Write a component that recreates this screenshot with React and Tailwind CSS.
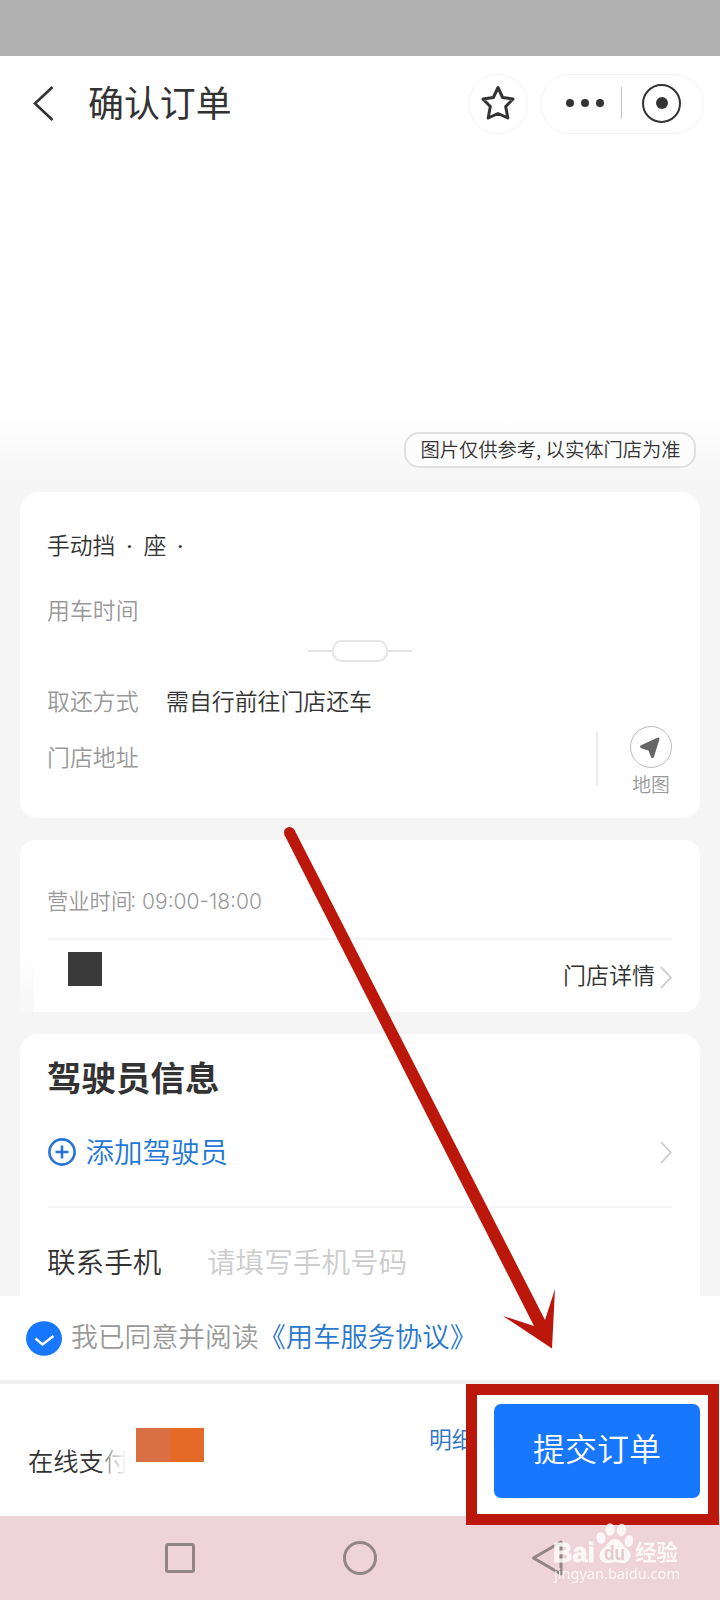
import React from "react";

function StatusBar() {
  return <div className="h-14 shrink-0 bg-[#b0b0b0]" />;
}

function Header() {
  return (
    <header className="flex h-[94px] shrink-0 items-center bg-white pt-px pr-4 pl-8">
      <svg width="24" height="36" viewBox="0 0 24 36" fill="none" stroke="#333" strokeWidth="2.6">
        <path d="M20.500 1 3 17.500 20.500 34" />
      </svg>
      <h1 className="mb-1 ml-8 text-[35.9px] leading-none font-normal text-[#333]">确认订单</h1>
      <div className="ml-auto flex items-center gap-3">
        <div className="flex size-[60px] items-center justify-center rounded-full border border-[#f3f3f3]">
          <svg className="mb-0.5" width="34" height="36" viewBox="0 0 34 36" fill="none" stroke="#333" strokeWidth="3" strokeLinejoin="round">
            <path d="M17 2.500 21.600 12.500 32 14 24.700 21.500 26.800 33 17 28.500 7.200 33 9.300 21.500 2 14 12.400 12.500Z" />
          </svg>
        </div>
        <div className="flex h-[60px] w-[164px] items-center rounded-full border border-[#f3f3f3] pb-px pl-[25px]">
          <div className="flex gap-[7px]">
            <i className="size-2 rounded-full bg-[#333]" />
            <i className="size-2 rounded-full bg-[#333]" />
            <i className="size-2 rounded-full bg-[#333]" />
          </div>
          <div className="ml-[17px] h-8 w-px bg-[#c4c4c4]" />
          <div className="ml-5 flex size-[39px] items-center justify-center rounded-full border-[2.5px] border-[#333]">
            <i className="size-3 rounded-full bg-[#333]" />
          </div>
        </div>
      </div>
    </header>
  );
}

function Hero() {
  return (
    <section className="flex h-[342px] shrink-0 items-end justify-end bg-linear-to-b from-white from-77% to-[#f5f5f5] to-98% pr-6 pb-6">
      <div className="flex h-9 w-[292px] items-center justify-center rounded-[15px] border-2 border-[#e0e0e0] bg-[#fcfcfc] text-[19.3px] leading-none whitespace-pre text-[#333]">
        <span className="ml-px">图片仅供参考, 以实体门店为准</span>
      </div>
    </section>
  );
}

function Chevron() {
  return (
    <svg width="13" height="24" viewBox="0 0 13 24" fill="none" stroke="#cacaca" strokeWidth="1.8">
      <path d="M2 2 11.800 12.500 2 23" />
    </svg>
  );
}

function Dot() {
  return (
    <span className="inline-block w-[28px] text-center font-medium" style={{ fontFamily: "Roboto, sans-serif" }}>·</span>
  );
}

function TripCard() {
  return (
    <section className="flex h-[326px] shrink-0 flex-col rounded-[18px] bg-white pr-7 pl-[27px] text-[22.9px] leading-8 text-[#999]">
      <div className="mt-[37px] h-8 text-[22.8px] whitespace-pre text-[#333]">
        手动挡<Dot />座<Dot />
      </div>
      <div className="mt-8 h-8">用车时间</div>
      <div className="mt-[15px] ml-px flex h-[22px] items-center justify-center">
        <i className="h-0.5 w-6 bg-[#e4e4e4]" />
        <i className="h-[22px] w-14 rounded-[10px] border-2 border-[#e4e4e4]" />
        <i className="h-0.5 w-6 bg-[#e4e4e4]" />
      </div>
      <div className="mt-[22px] flex h-8">
        <span className="w-[119px]">取还方式</span>
        <span className="text-[#333]">需自行前往门店还车</span>
      </div>
      <div className="mt-[10px] flex h-[78px]">
        <span className="pt-[14px]">门店地址</span>
        <i className="mt-[6px] ml-auto h-[54px] w-0.5 bg-[#ececec]" />
        <div className="ml-[32px] flex w-[42px] flex-col items-center text-[18.8px] leading-5">
          <div className="flex size-[42px] shrink-0 items-center justify-center rounded-full border border-[#bdbdbd]">
            <svg width="22" height="24" viewBox="0 0 22 24" className="-ml-0.5" fill="#666" stroke="#666" strokeWidth="3" strokeLinejoin="round">
              <path d="M19 4 2.600 11.700 10.500 14.200 13.400 21.500Z" />
            </svg>
          </div>
          <span className="mt-[6px]">地图</span>
        </div>
      </div>
    </section>
  );
}

function StoreCard() {
  return (
    <section className="mt-[22px] flex h-[172px] shrink-0 overflow-hidden rounded-[16px] rounded-bl-none bg-white">
      <div className="mt-[110px] h-[62px] w-3.5 bg-linear-to-b from-white to-[#f7f7f7]" />
      <div className="flex flex-1 flex-col pr-7 pl-3.5">
        <div className="mt-[44px] -ml-px h-8 text-[21.3px] leading-8 whitespace-nowrap text-[#999]">
          营业时间<span className="-ml-0.5 text-[21px]" style={{ fontFamily: 'Inter, "Noto Sans CJK SC", sans-serif' }}>: 09:00-18:00</span>
        </div>
        <div className="mt-[22px] h-0.5 bg-[#f5f5f5]" />
        <div className="flex h-[72px]">
          <i className="mt-[12px] ml-5 size-[34px] bg-[#3a3a3a]" />
          <div className="ml-auto flex h-[72px] items-center text-[23px] leading-none text-[#333]">
            <span className="mb-[3px]">门店详情</span>
            <span className="mt-px ml-[4px]"><Chevron /></span>
          </div>
        </div>
      </div>
    </section>
  );
}

function DriverCard() {
  return (
    <section className="mt-[22px] flex h-[262px] shrink-0 flex-col rounded-t-[18px] bg-white px-7">
      <h2 className="mt-[18px] -ml-px h-12 text-[34.5px] leading-12 font-bold text-[#333]">驾驶员信息</h2>
      <div className="mt-[28px] flex h-12 items-center text-[28.5px] leading-none text-[#1f77d6]">
        <svg width="28" height="28" viewBox="0 0 28 28" fill="none" stroke="#2673d9" strokeWidth="2.600">
          <circle cx="14" cy="14" r="12.600" />
          <path d="M14 7.500v13M7.500 14h13" />
        </svg>
        <span className="mb-px ml-[9.5px]">添加驾驶员</span>
        <span className="ml-auto"><Chevron /></span>
      </div>
      <div className="mt-[30px] h-0.5 bg-[#f5f5f5]" />
      <div className="mt-[29px] -ml-px flex h-12 text-[28.600px] leading-12">
        <span className="w-[160px] text-[#333]">联系手机</span>
        <span className="text-[#ccc]">请填写手机号码</span>
      </div>
    </section>
  );
}

function Agreement() {
  return (
    <section className="flex h-[84px] shrink-0 items-center bg-white pl-[26px] text-[26.8px] leading-none">
      <svg className="mt-0.5" width="36" height="36" viewBox="0 0 36 36">
        <ellipse cx="18" cy="17.500" rx="18" ry="17.200" fill="#1877ff" />
        <path d="m9.500 17.500 7 6 11-8.500" fill="none" stroke="#fff" strokeWidth="2.400" />
      </svg>
      <span className="mb-[5px] ml-[9px] whitespace-nowrap text-[#999]">
        我已同意并阅读<span className="text-[27.3px] text-[#2a78cc]">《用车服务协议》</span>
      </span>
    </section>
  );
}

function PayBar() {
  return (
    <section className="flex h-[136px] shrink-0 border-t-4 border-[#efefef] bg-white">
      <div className="mt-[60px] ml-[28px] h-8 w-[100px] text-[25.3px] leading-8 whitespace-nowrap text-[#333]">
        在线支<span className="bg-linear-to-r from-[#888] to-white to-90% bg-clip-text text-transparent">付</span>
      </div>
      <div className="mt-11 ml-2 flex h-[34px]">
        <i className="w-[34px] bg-[#d87044]" />
        <i className="w-[34px] bg-[#e56a28]" />
      </div>
      <div className="mt-[39px] ml-[225px] h-8 w-[37px] overflow-hidden text-[22.800px] leading-8 whitespace-nowrap text-[#2a74c4]">明细</div>
      <div className="relative z-10 h-[141px] w-[253px] shrink-0 border-[11px] border-[#bb180b] bg-white pt-[9px] pl-[17px]">
        <button className="h-[94px] w-[206px] rounded-[7px] bg-[#1877ff] pb-[9px] text-[32px] leading-none text-white">提交订单</button>
      </div>
    </section>
  );
}

function Watermark() {
  return (
    <div className="absolute top-[1521px] left-[552px] z-20 h-[64px] w-[130px] opacity-80">
      <svg width="130" height="64" viewBox="0 0 130 64" fill="#fff">
        <ellipse cx="49" cy="17" rx="4.500" ry="6" transform="rotate(-12 49 17)" />
        <ellipse cx="58" cy="8.500" rx="4.600" ry="6.300" />
        <ellipse cx="69.500" cy="9" rx="4.600" ry="6.300" transform="rotate(8 69.500 9)" />
        <ellipse cx="77" cy="20" rx="4.300" ry="5.800" transform="rotate(12 77 20)" />
        <path d="M63 18c-5 0-6 4-10 8-4 3-6 5.500-5.500 10 1 5 5.500 6.500 9.500 6 4-1 8-1 12 0 5 .5 8.500-2 9.500-6 .5-5-1.500-7-5.500-10-4-4-5-8-10-8Z" />
        <g stroke="#fff" strokeWidth=".8">
          <text x="1" y="40.500" fontSize="28" fontWeight="700" textLength="42" lengthAdjust="spacingAndGlyphs" fontFamily="Liberation Sans, sans-serif">Bai</text>
        </g>
        <text x="52" y="39" fontSize="20" fontWeight="700" fill="#e3c8cc" textLength="21" lengthAdjust="spacingAndGlyphs" fontFamily="Liberation Sans, sans-serif">du</text>
        <text x="83" y="39" fontSize="22" fontWeight="700" textLength="43" lengthAdjust="spacingAndGlyphs" fontFamily="Noto Sans CJK SC, sans-serif">经验</text>
        <text x="2" y="57.500" fontSize="14.500" fontWeight="400" textLength="126" lengthAdjust="spacingAndGlyphs" fontFamily="Noto Sans, sans-serif">jingyan.baidu.com</text>
      </svg>
    </div>
  );
}

function SystemNav() {
  return (
    <nav className="flex h-[84px] shrink-0 items-center bg-[#eed3d8] pl-[165px]">
      <i className="size-[30px] rounded-[3px] border-[3px] border-[#928586]" />
      <i className="ml-[148px] size-[34px] rounded-full border-[3px] border-[#928586]" />
      <svg className="ml-[153px]" width="34" height="40" viewBox="0 0 34 40" fill="none" stroke="#928586" strokeWidth="3">
        <path d="M31 4v32L3.500 20Z" strokeLinejoin="round" />
      </svg>
    </nav>
  );
}

export default function App() {
  return (
    <div
      className="relative flex h-[1600px] w-[720px] flex-col overflow-hidden bg-[#f5f5f5] font-[350]"
      style={{ fontFamily: '"Noto Sans CJK SC", sans-serif' }}
    >
      <StatusBar />
      <Header />
      <Hero />
      <main className="flex h-[804px] shrink-0 flex-col px-5">
        <TripCard />
        <StoreCard />
        <DriverCard />
      </main>
      <Agreement />
      <PayBar />
      <SystemNav />
      <Watermark />
      <svg className="absolute top-[820px] left-[280px] z-20" width="290" height="535" viewBox="280 820 290 535" fill="#bb180b">
        <circle cx="289.500" cy="832.500" r="5.500" />
        <path d="M294.500 830 545 1320 555 1289 552 1348.500 503 1316 534 1326 284.500 835Z" />
      </svg>
    </div>
  );
}
